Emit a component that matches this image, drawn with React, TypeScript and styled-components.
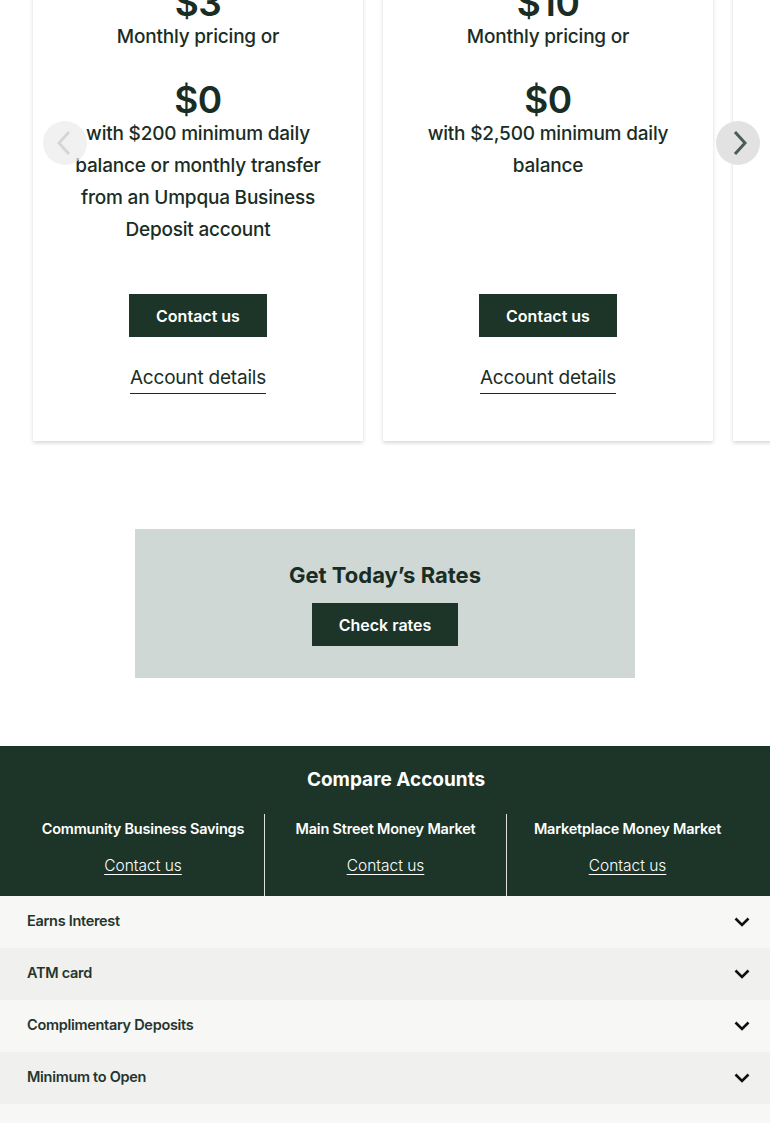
import React from 'react'
import styled, { createGlobalStyle } from 'styled-components'

const Theme = {
  green: '#1c3528',
  text: '#1a2d24',
  sage: '#cfd8d4',
}

type Plan = {
  price: string
  base: string
  waived: string
  condition: string
}

const plans: Plan[] = [
  {
    price: '$3',
    base: 'Monthly pricing or',
    waived: '$0',
    condition: 'with $200 minimum daily balance or monthly transfer from an Umpqua Business Deposit account',
  },
  {
    price: '$10',
    base: 'Monthly pricing or',
    waived: '$0',
    condition: 'with $2,500 minimum daily balance',
  },
  {
    price: '$10',
    base: 'Monthly pricing or',
    waived: '$0',
    condition: 'with $10,000 minimum daily balance',
  },
]

const accounts = ['Community Business Savings', 'Main Street Money Market', 'Marketplace Money Market']

const features = ['Earns Interest', 'ATM card', 'Complimentary Deposits', 'Minimum to Open', 'Monthly Pricing Options']

const App: React.FC = () => {
  return (
    <Page>
      <GlobalStyle />
      <Carousel>
        <Track>
          {plans.map((plan, i) => (
            <Card key={i}>
              <Price>{plan.price}</Price>
              <Label>{plan.base}</Label>
              <Price $spaced>{plan.waived}</Price>
              <Condition>{plan.condition}</Condition>
              <DarkButton>Contact us</DarkButton>
              <DetailsLink href="#">Account details</DetailsLink>
            </Card>
          ))}
        </Track>
        <ArrowButton $side="left" $disabled aria-label="Previous">
          <svg width="14" height="26" viewBox="0 0 14 26">
            <polyline points="12,2 2,13 12,24" fill="none" stroke="currentColor" strokeWidth="3" />
          </svg>
        </ArrowButton>
        <ArrowButton $side="right" aria-label="Next">
          <svg width="14" height="26" viewBox="0 0 14 26">
            <polyline points="2,2 12,13 2,24" fill="none" stroke="currentColor" strokeWidth="3" />
          </svg>
        </ArrowButton>
      </Carousel>

      <RatesBox>
        <RatesTitle>Get Today’s Rates</RatesTitle>
        <DarkButton>Check rates</DarkButton>
      </RatesBox>

      <Compare>
        <CompareTitle>Compare Accounts</CompareTitle>
        <CompareCols>
          {accounts.map((name) => (
            <CompareCol key={name}>
              <ColName>{name}</ColName>
              <ColLink href="#">Contact us</ColLink>
            </CompareCol>
          ))}
        </CompareCols>
      </Compare>

      <Accordion>
        {features.map((f, i) => (
          <Row key={f} $alt={i % 2 === 1}>
            <RowLabel>{f}</RowLabel>
            <svg width="16" height="10" viewBox="0 0 16 10">
              <polyline points="1.5,1.5 8,8 14.5,1.5" fill="none" stroke="#111" strokeWidth="2.6" />
            </svg>
          </Row>
        ))}
      </Accordion>
    </Page>
  )
}

const GlobalStyle = createGlobalStyle`
  html, body {
    margin: 0;
    padding: 0;
    background: #fff;
    font-family: Inter, "Liberation Sans", sans-serif;
    color: ${Theme.text};
  }
  #root {
    overflow: hidden;
  }
`

const Page = styled.div`
  width: 770px;
  display: flex;
  flex-direction: column;
`

// page is scrolled: top of the cards sits above the viewport
const Carousel = styled.div`
  position: relative;
  margin-top: -55px;
  overflow: hidden;
  padding-bottom: 6px;
`

const Track = styled.div`
  display: flex;
  gap: 20px;
  padding-left: 33px;
  align-items: stretch;
`

const Card = styled.div`
  flex: 0 0 330px;
  display: flex;
  flex-direction: column;
  align-items: center;
  box-sizing: border-box;
  padding: 40px 30px 47px;
  background: #fff;
  box-shadow: 0 2px 4px rgba(0, 0, 0, 0.16);
  text-align: center;
`

const Price = styled.div<{ $spaced?: boolean }>`
  font-size: 37px;
  line-height: 36px;
  font-weight: 600;
  letter-spacing: -0.5px;
  margin-top: ${(p) => (p.$spaced ? '29px' : '0')};
`

const Label = styled.div`
  font-size: 19px;
  line-height: 32px;
  font-weight: 500;
  letter-spacing: -0.2px;
`

const Condition = styled.div`
  flex: 1;
  font-size: 19px;
  line-height: 32px;
  font-weight: 500;
  letter-spacing: -0.2px;
  min-height: 128px;
`

const DarkButton = styled.button`
  height: 43px;
  padding: 0 27px;
  border: none;
  background: ${Theme.green};
  color: #fff;
  font-family: inherit;
  font-size: 16px;
  font-weight: 600;
  cursor: pointer;
  ${Card} & {
    margin-top: 48px;
  }
`

const DetailsLink = styled.a`
  margin-top: 29px;
  font-size: 19px;
  line-height: 24px;
  font-weight: 400;
  letter-spacing: -0.2px;
  color: ${Theme.text};
  text-decoration: none;
  border-bottom: 1px solid ${Theme.text};
  padding-bottom: 3px;
`

const ArrowButton = styled.button<{ $side: 'left' | 'right'; $disabled?: boolean }>`
  position: absolute;
  top: 176px;
  ${(p) => (p.$side === 'left' ? 'left: 43px;' : 'left: 716px;')}
  width: 44px;
  height: 44px;
  border-radius: 50%;
  border: none;
  display: flex;
  align-items: center;
  justify-content: center;
  padding: 0;
  background: ${(p) => (p.$disabled ? 'rgba(235, 235, 235, 0.7)' : '#e2e2e2')};
  color: ${(p) => (p.$disabled ? '#d6d6d6' : '#4b5c54')};
  svg {
    margin-left: ${(p) => (p.$side === 'left' ? '-3px' : '3px')};
  }
`

const RatesBox = styled.div`
  align-self: center;
  width: 500px;
  margin-top: 82px;
  padding: 32px 0;
  background: ${Theme.sage};
  display: flex;
  flex-direction: column;
  align-items: center;
  gap: 14px;
`

const RatesTitle = styled.h2`
  margin: 0;
  font-size: 22px;
  line-height: 28px;
  font-weight: 700;
`

const Compare = styled.div`
  margin-top: 68px;
  background: ${Theme.green};
  color: #fff;
  padding: 22px 22px 0;
`

const CompareTitle = styled.h2`
  margin: 0;
  padding-left: 22px;
  text-align: center;
  font-size: 19px;
  line-height: 24px;
  font-weight: 700;
`

const CompareCols = styled.div`
  display: grid;
  grid-template-columns: repeat(3, 1fr);
  margin-top: 22px;
`

const CompareCol = styled.div`
  display: flex;
  flex-direction: column;
  align-items: center;
  padding: 5px 0 20px;
  gap: 17px;
  & + & {
    border-left: 1px solid rgba(255, 255, 255, 0.85);
  }
`

const ColName = styled.div`
  font-size: 14.5px;
  line-height: 20px;
  font-weight: 600;
  letter-spacing: -0.2px;
`

const ColLink = styled.a`
  font-size: 15.5px;
  line-height: 20px;
  font-weight: 300;
  color: #fff;
  text-decoration: underline;
  text-underline-offset: 3px;
`

const Accordion = styled.div`
  display: flex;
  flex-direction: column;
`

const Row = styled.div<{ $alt: boolean }>`
  height: 52px;
  display: flex;
  align-items: center;
  justify-content: space-between;
  padding: 0 20px 0 27px;
  background: ${(p) => (p.$alt ? '#f0f0ee' : '#f7f7f5')};
`

const RowLabel = styled.div`
  margin-top: -4px;
  font-size: 14.5px;
  font-weight: 600;
  letter-spacing: -0.3px;
  color: #24352d;
`

export default App
